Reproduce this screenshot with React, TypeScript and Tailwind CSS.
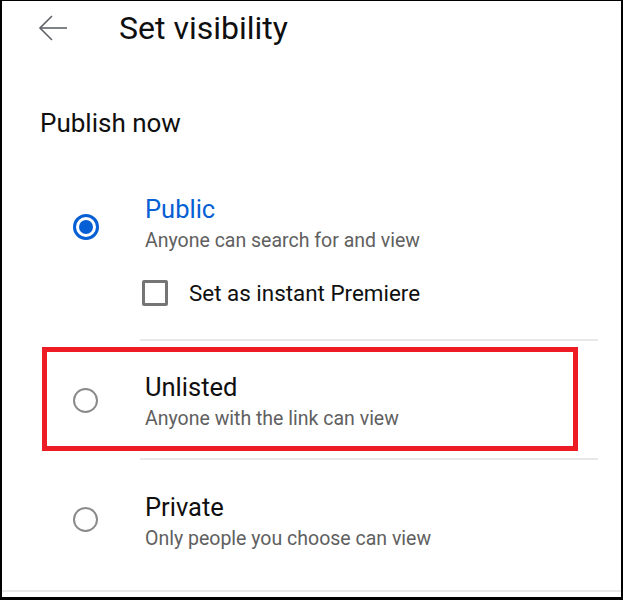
import { useState } from 'react'

type Visibility = 'public' | 'unlisted' | 'private'

const font = { fontFamily: 'Roboto, "Noto Sans", sans-serif' }

const Radio = ({ checked }: { checked: boolean }) =>
  checked ? (
    <span className="flex h-[26px] w-[26px] items-center justify-center rounded-full border-[3px] border-[#065fd4]">
      <span className="h-[14px] w-[14px] rounded-full bg-[#065fd4]" />
    </span>
  ) : (
    <span className="block h-[25px] w-[25px] rounded-full border-[2.5px] border-[#8a8a8a]" />
  )

const OptionText = ({ title, subtitle, active }: { title: string; subtitle: string; active?: boolean }) => (
  <div className="flex flex-col">
    <span className={`text-[25.5px] leading-[28px] ${active ? 'text-[#065fd4]' : 'text-[#0f0f0f]'}`}>{title}</span>
    <span className="mt-[6px] text-[19.5px] leading-[24px] text-[#606060]">{subtitle}</span>
  </div>
)

const Divider = ({ className }: { className: string }) => <div className={`h-[2px] bg-[#e8e8e8] ${className}`} />

export default function App() {
  const [value, setValue] = useState<Visibility>('public')
  const [premiere, setPremiere] = useState(false)

  return (
    <div
      className="flex h-[600px] w-[623px] flex-col border-t border-r-2 border-b-[3px] border-l-2 border-black bg-white"
      style={font}
    >
      <header className="flex h-[54px] shrink-0 items-center">
        <button className="ml-[36px]" aria-label="Back">
          <svg width="30" height="26" viewBox="0 0 30 26" fill="none" stroke="#5f6368" strokeWidth="1.6">
            <path d="M2 13H29" />
            <path d="M14 1L2 13L14 25" />
          </svg>
        </button>
        <h1 className="ml-[51px] text-[32px] leading-[40px] text-[#0f0f0f]">Set visibility</h1>
      </header>

      <div className="mt-[52px] pl-[38px] text-[26px] leading-[32px] text-[#0f0f0f]">Publish now</div>

      {/* Public */}
      <div className="mt-[56px] flex cursor-pointer items-start" onClick={() => setValue('public')}>
        <div className="ml-[71px] mt-[19px] w-[72px]">
          <Radio checked={value === 'public'} />
        </div>
        <OptionText title="Public" subtitle="Anyone can search for and view" active={value === 'public'} />
      </div>
      <div className="mt-[26px] flex cursor-pointer items-center" onClick={() => setPremiere(p => !p)}>
        <span className="ml-[140px] flex h-[26px] w-[26px] items-center justify-center rounded-[2px] border-[3px] border-[#757575]">
          {premiere && <span className="h-[12px] w-[12px] bg-[#757575]" />}
        </span>
        <span className="ml-[21px] text-[22.4px] leading-[28px] text-[#0f0f0f]">Set as instant Premiere</span>
      </div>

      <Divider className="mt-[32px] ml-[138px] mr-[23px]" />

      {/* Unlisted, highlighted */}
      <div
        className="ml-[40px] mt-[6px] flex w-[536px] cursor-pointer items-start border-[5px] border-[#ed1c24] pt-[21px] pb-[15px]"
        onClick={() => setValue('unlisted')}
      >
        <div className="ml-[26px] mt-[15px] w-[72px]">
          <Radio checked={value === 'unlisted'} />
        </div>
        <OptionText title="Unlisted" subtitle="Anyone with the link can view" active={value === 'unlisted'} />
      </div>

      <Divider className="mt-[7px] ml-[138px] mr-[23px]" />

      {/* Private */}
      <div className="mt-[33px] flex cursor-pointer items-start" onClick={() => setValue('private')}>
        <div className="ml-[71px] mt-[14px] w-[72px]">
          <Radio checked={value === 'private'} />
        </div>
        <OptionText title="Private" subtitle="Only people you choose can view" active={value === 'private'} />
      </div>

      <Divider className="mt-[39px]" />
    </div>
  )
}
